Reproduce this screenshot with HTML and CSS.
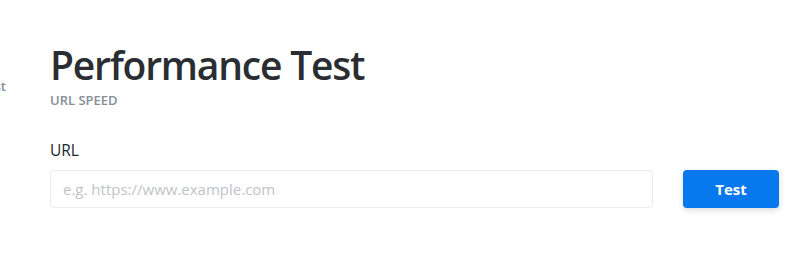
FILE: index.html
```html
<!DOCTYPE html>
<html lang="en">
<head>
<meta charset="utf-8">
<title>Performance Test</title>
<link rel="stylesheet" href="styles.css">
</head>
<body>
<div class="layout">
  <aside class="sidebar"><span class="side-item">Test</span></aside>
  <main class="main">
    <header class="page-head">
      <h1 class="title">Performance Test</h1>
      <div class="subtitle">URL SPEED</div>
    </header>
    <form class="test-form">
      <label class="field-label" for="url">URL</label>
      <div class="field-row">
        <input class="url-input" id="url" type="text" placeholder="e.g. https://www.example.com">
        <button class="btn-test" type="button">Test</button>
      </div>
    </form>
  </main>
</div>
</body>
</html>
```

FILE: styles.css
```css
html, body {
  margin: 0;
  padding: 0;
  background: #ffffff;
}
body {
  font-family: "Open Sans", "Noto Sans", sans-serif;
  color: #212529;
}
.layout {
  display: flex;
  height: 266px;
}
.sidebar {
  width: 6px;
  overflow: hidden;
  display: flex;
  justify-content: flex-end;
  padding-top: 78px;
  flex-shrink: 0;
}
.side-item {
  font-size: 13px;
  font-weight: 600;
  color: #868e96;
  white-space: nowrap;
  line-height: 16px;
}
.main {
  flex: 1;
  padding: 42px 29px 0 44px;
}
.title {
  margin: 0;
  font-size: 39px;
  font-weight: 600;
  line-height: 46px;
  color: #2a2d31;
  letter-spacing: -1.2px;
}
.subtitle {
  font-size: 13px;
  font-weight: 600;
  color: #868e96;
  line-height: 18px;
  margin-top: 3px;
}
.test-form {
  margin-top: 31px;
}
.field-label {
  display: block;
  font-size: 15.5px;
  line-height: 20px;
  color: #212529;
  margin-bottom: 10px;
}
.field-row {
  display: flex;
  gap: 30px;
}
.url-input {
  flex: 1;
  height: 38px;
  box-sizing: border-box;
  border: 1px solid #e9ecef;
  border-radius: 4px;
  padding: 0 12px;
  font-family: inherit;
  font-size: 15px;
  color: #212529;
  outline: none;
}
.url-input::placeholder {
  color: #bfc4c9;
}
.btn-test {
  width: 96px;
  height: 38px;
  border: none;
  border-radius: 4px;
  background: #0778ed;
  color: #ffffff;
  font-family: inherit;
  font-size: 15px;
  font-weight: 700;
  box-shadow: 0 2px 6px rgba(0, 0, 0, 0.15);
}
```
